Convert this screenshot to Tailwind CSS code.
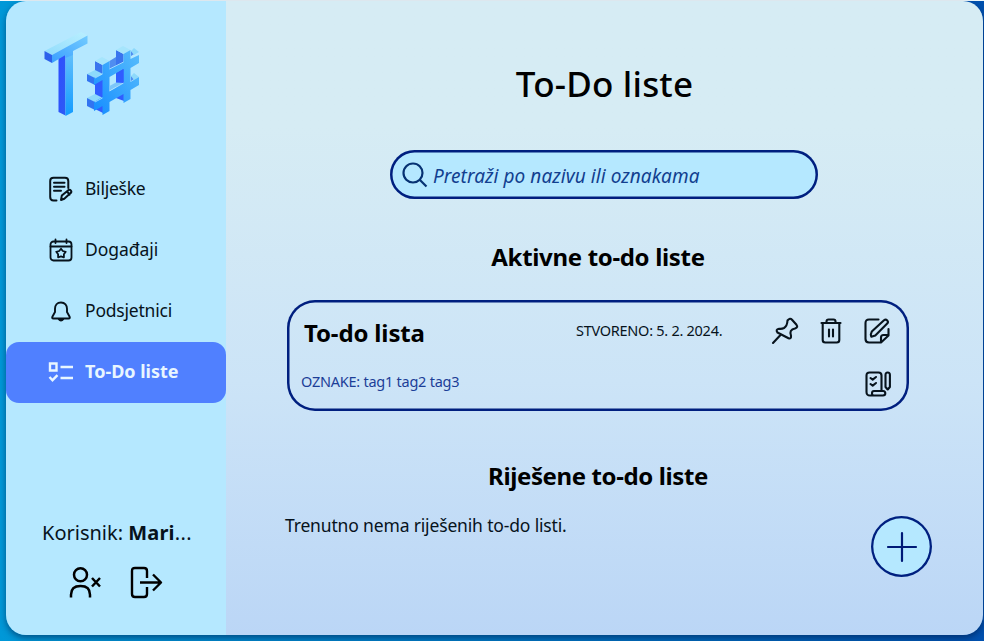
<!DOCTYPE html>
<html lang="hr">
<head>
<meta charset="utf-8">
<title>To-Do liste</title>
<script src="https://cdn.jsdelivr.net/npm/@tailwindcss/browser@4"></script>
</head>
<body class="h-[641px] w-[984px] overflow-hidden bg-linear-to-r from-[#0098d8] via-[#0078c4] to-[#0050ae] pl-[6px] pr-px font-['Noto_Sans','Open_Sans',sans-serif] whitespace-nowrap text-[#07131c]">
<div class="-ml-[6px] -mr-px h-px bg-[#eef8fc]"></div>
<div class="flex h-[634px] overflow-hidden rounded-[20px] shadow-[0_3px_6px_rgba(0,20,60,0.5)]">
  <aside class="flex w-[220px] shrink-0 flex-col bg-[#b5e8ff]">
    <div class="h-[158px] pl-[36px] pt-[29px]">
      <svg class="h-[90px] w-[102px]" viewBox="42 30 102 90">
        <defs>
          <linearGradient id="top" x1="0" y1="1" x2="1" y2="0"><stop stop-color="#91dcfc"/><stop offset="1" stop-color="#b9efff"/></linearGradient>
          <linearGradient id="face" x1="0" y1="1" x2="1" y2="0"><stop stop-color="#3b9fff"/><stop offset="1" stop-color="#72cbff"/></linearGradient>
          <linearGradient id="stem" x1="0" y1="0" x2="0" y2="1"><stop stop-color="#67c2fb"/><stop offset="1" stop-color="#129bff"/></linearGradient>
          <linearGradient id="hash" x1="0" y1="1" x2="1" y2="0"><stop stop-color="#158dff"/><stop offset="1" stop-color="#58bdfc"/></linearGradient>
          <linearGradient id="side" x1="0" y1="0" x2="1" y2="1"><stop stop-color="#2f4dff"/><stop offset="1" stop-color="#2c5bf4"/></linearGradient>
        </defs>
        <path fill="url(#side)" d="M58.500 56l7-3v62.500l-7-3.500z"/>
        <path fill="url(#stem)" d="M65.500 54l7.500-4v62l-7.500 4z"/>
        <path fill="url(#top)" d="M44.500 51L81 32l6.500 3.500L52 55z"/>
        <path fill="#2d61eb" d="M44.500 51l7.500 4v8l-7.500-4z"/>
        <path fill="url(#face)" d="M52 55l35.500-19.500v8L73 51v4l-7.500 3v-3L52 63z"/>
        <path fill="#3a74ee" d="M116 50l7.500 4v13l-7.500 4zM95 61l7.500 4v11l-7.500 4z"/>
        <path fill="#305dff" d="M116 70l8-4v35l-8-3zM95 82l8-4v35l-8-4z"/>
        <path fill="#a6e5fc" d="M116 50l7-4 7.500 4-7 4zM95 61l7-4 7.500 4-7 4z"/>
        <path fill="#4f8df0" d="M109.500 61l6.500-4v9l-6.500 4zM131 51l4 2.500-4 2.500zM131 76l4 2.500-4 2.500z"/>
        <path fill="#8dd9fb" d="M87 74l8-4 8 4-8 4zM87 98l8-4 8 4-8 4zM131 51l3-3 5 4-5 3zM131 76l3-3 5 4-5 3z"/>
        <path fill="#3274f1" d="M87 74l8 4v7l-8-4zM87 98l8 4v8l-8-4z"/>
        <path fill="url(#hash)" fill-rule="evenodd" d="M102.500 65l7-4v8l14-7v-8l7-4v9l8.500-4v8l-8.500 5v14l8.500-5v8l-8.500 5v9l-7 4v-9l-14 8v9l-7 4v-9l-8.500 5v-9l8.500-5V80l-8.500 5v-7l8.500-4zM109.500 77v14l14-8V69z"/>
        <path fill="#305dff" d="M117 73l6.500-4v14h-6.500z"/>
        <path fill="#7cc6f9" d="M109.500 86l6.500-3.500 7.500.5-14 8z"/>
        <path fill="none" stroke="#c9f1ff" stroke-width=".7" d="M95 78l7.500-4M95 102l7.500-4M109.500 91l14-8M109.500 69l14-7"/>
      </svg>
    </div>
    <nav class="flex flex-col text-[17.500px]">
      <div class="flex h-[61px] items-center pb-[2px] pl-[42px]">
        <svg class="h-[26px] w-[26px]" viewBox="0 0 26 26" fill="none" stroke="currentColor" stroke-width="2" stroke-linecap="round" stroke-linejoin="round"><path d="M8.500 24.500H5.500Q2.200 24.500 2.200 21V5Q2.200 1.700 5.500 1.700H17Q20.300 1.700 20.300 5V12M6 6.700h10.500M6 10.700h10.500M6 14.700h7M13 24l.8-4.400 6.500-5.400q1.500-1 2.600.4t-.3 2.500l-6.300 5.600zM19 15.500l2.700 3.100"/></svg>
        <span class="ml-[11px] tracking-[-0.25px]">Bilješke</span>
      </div>
      <div class="flex h-[61px] items-center pb-[2px] pl-[42px]">
        <svg class="h-[26px] w-[26px]" viewBox="0 0 26 26" fill="none" stroke="currentColor" stroke-width="1.800" stroke-linecap="round" stroke-linejoin="round"><rect x="2.500" y="4.500" width="21" height="19" rx="3"/><path d="M2.500 9.500h21M7.500 2.500v3.500M18.500 2.500v3.500M13 11.800l1.800 2.200 2.900.8-1.800 2.500v3L13 19.400l-2.900.9v-3l-1.800-2.500 2.900-.8z"/></svg>
        <span class="ml-[11px] tracking-[-0.05px]">Događaji</span>
      </div>
      <div class="flex h-[61px] items-center pb-[2px] pl-[42px]">
        <svg class="h-[26px] w-[26px]" viewBox="0 0 26 26" fill="none" stroke="currentColor" stroke-width="1.900" stroke-linecap="round" stroke-linejoin="round"><path d="M13 4.500c-4 0-6 2.800-6 6.200V14l-2.500 4.500q-1 2 1 2h15q2 0 1-2L19 14v-3.300c0-3.400-2-6.200-6-6.200zM10.500 21q2.500 3 5 0"/></svg>
        <span class="ml-[11px] tracking-[-0.2px]">Podsjetnici</span>
      </div>
      <div class="flex h-[61px] items-center rounded-[13px] bg-[#5080ff] pb-[2px] pl-[42px] text-[18px] font-bold text-[#e8f6ff]">
        <svg class="h-[26px] w-[26px]" viewBox="0 0 26 26" fill="none" stroke="currentColor" stroke-width="2.400"><path d="M2 4.500h6.500v7H2zM12.500 8H25M12.500 19H25M1.500 18l3 3.200 5-5"/></svg>
        <span class="ml-[11px]">To-Do liste</span>
      </div>
    </nav>
    <div class="mt-[115px] pl-[36px] text-[20px] leading-[30px]"><span>Korisnik: </span><b class="tracking-[0.15px]">Mari</b><span class="tracking-[0.4px]">...</span></div>
    <div class="mt-[17px] flex gap-[26px] pl-[62px] text-black">
      <svg class="h-[36px] w-[36px]" viewBox="0 0 36 36" fill="none" stroke="currentColor" stroke-width="2.500"><circle cx="12.500" cy="9.700" r="6.500"/><path d="M3 32.500v-2.800q0-8.700 9.500-8.700t9.500 8.700v2.800M24 13l8 8.500M32 13l-8 8.500"/></svg>
      <svg class="h-[36px] w-[36px]" viewBox="0 0 36 36" fill="none" stroke="currentColor" stroke-width="2.400" stroke-linejoin="round"><path d="M17 13V6q0-3-3-3H5q-3 0-3 3v23q0 3 3 3h9q3 0 3-3v-7M10 17.500h21M23 9.500l8 8-8 8"/></svg>
    </div>
  </aside>
  <main class="relative flex grow flex-col bg-linear-to-b from-[#d6ecf4] from-20% via-[#cce4f7] via-60% to-[#bbd6f6]">
    <h1 class="mt-[59px] text-center text-[35px] font-medium leading-[48px] tracking-[0.2px] text-black">To-Do liste</h1>
    <div class="ml-[164px] mt-[42px] flex h-[49px] w-[428px] items-center rounded-full bg-[#b5e8ff] pl-[11px] text-[#123f8f] shadow-[inset_0_0_0_2.5px_#001f7f]">
      <svg class="h-[28px] w-[28px] text-[#063273]" viewBox="0 0 28 28" fill="none" stroke="currentColor" stroke-width="2.200"><circle cx="12" cy="12" r="9.500"/><path d="M18.500 18.500l7 7"/></svg>
      <span class="ml-[4px] mt-[3px] text-[19px] italic tracking-[0.06px]">Pretraži po nazivu ili oznakama</span>
    </div>
    <h2 class="mt-[41px] pr-[13px] text-center text-[24px] font-bold leading-[34px] tracking-[-0.33px] text-black">Aktivne to-do liste</h2>
    <section class="ml-[61px] mt-[26px] flex h-[111px] w-[622px] flex-col rounded-[28px] px-[2px] pt-[3px] shadow-[inset_0_0_0_2.5px_#001f7f]">
      <div class="flex h-[59px] items-center pl-[15px]">
        <b class="w-[272px] text-[24px] tracking-[-0.15px] text-black">To-do lista</b>
        <span class="mb-[3px] w-[195px] text-[14.500px] tracking-[-0.27px]">STVORENO: 5. 2. 2024.</span>
        <div class="mb-[4px] flex gap-[18px]">
          <svg class="h-[28px] w-[28px]" viewBox="0 0 28 28" fill="none" stroke="currentColor" stroke-width="2.100" stroke-linecap="round" stroke-linejoin="round"><path d="M2 26l7.500-8M16.500 3.500q2.500-3 4.500-.7l4.500 5q2 2.500-1.500 3.700-3 .4-4.200 2.500-.8 1.500.2 4.700.4 3.400-2.500 2.600L6.500 15.500q-2.300-3 1.500-3.700 3 .3 5-.8 3.200-2 3.500-7.500z"/></svg>
          <svg class="h-[28px] w-[28px]" viewBox="0 0 28 28" fill="none" stroke="currentColor" stroke-width="2.100" stroke-linecap="round" stroke-linejoin="round"><path d="M4.500 6h19M9.500 6V4.500q0-2 2-2h5q2 0 2 2V6M5.700 6v17q0 2.500 2.500 2.500h11.600q2.500 0 2.500-2.500V6M12 12.500v7M16 12.500v7"/></svg>
          <svg class="h-[28px] w-[28px]" viewBox="0 0 28 28" fill="none" stroke="currentColor" stroke-width="2.100" stroke-linecap="round" stroke-linejoin="round"><path d="M15.500 2.500H6Q2.500 2.500 2.500 6v16Q2.500 25.500 6 25.500h12l7.500-7V12M18 25v-4.500q0-2.500 2.500-2.500h5M7.800 17.500l1-3L21 3.200q1.700-1.400 3.200.2t0 3.200L12.300 18.500l-4 1.200z"/></svg>
        </div>
      </div>
      <div class="flex h-[44px] items-center pl-[12px] text-[14.500px] text-[#1c3e97]">
        <span class="mb-[4px] tracking-[-0.25px]">OZNAKE: tag1 tag2 tag3</span>
        <svg class="ml-auto mr-[15px] h-[28px] w-[28px] text-[#07131c]" viewBox="0 0 28 28" fill="none" stroke="currentColor" stroke-width="2.100" stroke-linecap="round" stroke-linejoin="round"><path d="M8 25.500H6Q2.500 25.500 2.500 22V5.500Q2.500 2.500 5.500 2.500h9Q17.500 2.500 17.500 5.500V21H10q-2 0-2 2.300t2 2.200h9q2.300 0 2.300-2.200T19 21h-1.500M6.500 8l2.200 1.600L12 7M6.500 14l2.200 1.600L12 13M21.500 17V5q0-2.500 2.200-2.500T25.900 5v12l-2.200 2.500z"/></svg>
      </div>
    </section>
    <h2 class="mt-[48px] pr-[13px] text-center text-[24px] font-bold leading-[34px] tracking-[-0.38px] text-black">Riješene to-do liste</h2>
    <p class="ml-[59px] mt-[17px] text-[17.500px] leading-[30px] tracking-[-0.16px]">Trenutno nema riješenih to-do listi.</p>
    <button class="absolute left-[645px] top-[515px] flex h-[61px] w-[61px] items-center justify-center rounded-full bg-[#b5e8ff] text-[#001a77] shadow-[inset_0_0_0_2.3px_#001f7f]">
      <svg class="h-[32px] w-[32px]" viewBox="0 0 32 32" fill="none" stroke="currentColor" stroke-width="2.200" stroke-linecap="round"><path d="M16 2v28M2 16h28"/></svg>
    </button>
  </main>
</div>
</body>
</html>
